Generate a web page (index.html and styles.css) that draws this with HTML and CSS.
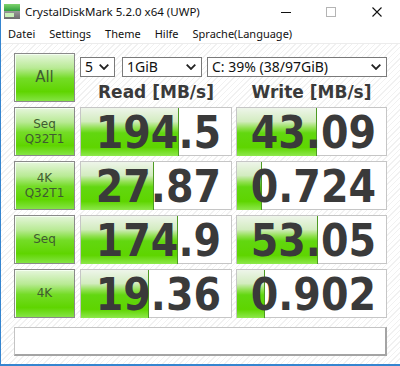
FILE: index.html
```html
<!DOCTYPE html>
<html lang="de">
<head>
    <meta charset="UTF-8">
    <meta name="viewport" content="width=device-width, initial-scale=1.0">
    <title>CrystalDiskMark 5.2.0 x64 (UWP)</title>
    <link rel="stylesheet" href="styles.css">
</head>
<body>
    <div class="window">
        <div class="title-bar">
            <svg class="app-icon" width="16" height="16" viewBox="0 0 16 16">
                <defs>
                    <linearGradient id="top" x1="0" y1="0" x2="0" y2="1">
                        <stop offset="0" stop-color="#7fd46f"/>
                        <stop offset="1" stop-color="#2f9e3c"/>
                    </linearGradient>
                    <linearGradient id="body" x1="0" y1="0" x2="0" y2="1">
                        <stop offset="0" stop-color="#9a9a9a"/>
                        <stop offset="1" stop-color="#6c6c6c"/>
                    </linearGradient>
                </defs>
                <rect x="0" y="0" width="16" height="7" fill="url(#top)"/>
                <rect x="0" y="7" width="16" height="8" fill="url(#body)"/>
                <rect x="1" y="9" width="9" height="4" fill="#c8f0b8"/>
            </svg>
            <span class="title">CrystalDiskMark 5.2.0 x64 (UWP)</span>
            <div class="caption-btns">
                <span class="cap-btn min"></span>
                <span class="cap-btn max"></span>
                <svg class="cap-btn close" width="10" height="10" viewBox="0 0 10 10">
                    <path d="M0.5 0.5 L9.5 9.5 M9.5 0.5 L0.5 9.5" stroke="#111" stroke-width="1.1"/>
                </svg>
            </div>
        </div>

        <div class="menu-bar">
            <span>Datei</span>
            <span>Settings</span>
            <span>Theme</span>
            <span>Hilfe</span>
            <span>Sprache(Language)</span>
        </div>

        <div class="content">
            <div class="top">
                <div class="test-btn all">All</div>
                <div class="top-right">
                    <div class="selects">
                        <div class="dropdown count">5<svg class="chev" width="10" height="6" viewBox="0 0 10 6"><path d="M0.7 0.7 L5 5 L9.3 0.7" fill="none" stroke="#222" stroke-width="1.8"/></svg></div>
                        <div class="dropdown size">1GiB<svg class="chev" width="10" height="6" viewBox="0 0 10 6"><path d="M0.7 0.7 L5 5 L9.3 0.7" fill="none" stroke="#222" stroke-width="1.8"/></svg></div>
                        <div class="dropdown drive">C: 39% (38/97GiB)<svg class="chev" width="10" height="6" viewBox="0 0 10 6"><path d="M0.7 0.7 L5 5 L9.3 0.7" fill="none" stroke="#222" stroke-width="1.8"/></svg></div>
                    </div>
                    <div class="heads">
                        <div>Read [MB/s]</div>
                        <div>Write [MB/s]</div>
                    </div>
                </div>
            </div>

            <div class="results">
                <div class="test-btn">Seq<br>Q32T1</div>
                <div class="meter"><div class="bar" style="width: 97px"></div><div class="num">194.5</div></div>
                <div class="meter"><div class="bar" style="width: 79px"></div><div class="num">43.09</div></div>

                <div class="test-btn">4K<br>Q32T1</div>
                <div class="meter"><div class="bar" style="width: 72px"></div><div class="num">27.87</div></div>
                <div class="meter"><div class="bar" style="width: 24px"></div><div class="num">0.724</div></div>

                <div class="test-btn">Seq</div>
                <div class="meter"><div class="bar" style="width: 96px"></div><div class="num">174.9</div></div>
                <div class="meter"><div class="bar" style="width: 80px"></div><div class="num">53.05</div></div>

                <div class="test-btn">4K</div>
                <div class="meter"><div class="bar" style="width: 67px"></div><div class="num">19.36</div></div>
                <div class="meter"><div class="bar" style="width: 27px"></div><div class="num">0.902</div></div>
            </div>

            <div class="comment"></div>
        </div>
    </div>
</body>
</html>
```

FILE: styles.css
```css
:root {
    --blue: #3585d0;
    --ink: #3a3a3a;
    --label: #3f5c30;
    --green-fill: linear-gradient(to bottom, #eef5ea 0%, #d3ecc0 28%, #8fe04e 42%, #62d710 52%, #5ed500 82%, #8ee84c 100%);
}

html, body { margin: 0; }
body { width: 400px; height: 366px; overflow: hidden; background: #fff; }

.window { box-sizing: border-box; width: 400px; height: 366px; border-left: 1px solid var(--blue); border-bottom: 2px solid var(--blue); display: flex; flex-direction: column; background: repeating-linear-gradient(135deg, #fff 0 3px, #f1f1f1 3px 4px); }

.title-bar { height: 24px; background: #fff; display: flex; align-items: center; font-family: "Noto Sans", sans-serif; font-size: 11.5px; color: #111; }
.app-icon { margin: 0 5px 0 3px; }
.title { padding-bottom: 2px; }
.caption-btns { margin-left: auto; display: flex; align-items: center; height: 100%; }
.cap-btn { display: block; }
.cap-btn.min { width: 10px; height: 1px; background: #111; margin-right: 35px; }
.cap-btn.max { width: 8px; height: 8px; border: 1px solid #b4b4b4; margin-right: 36px; }
.cap-btn.close { margin-right: 18px; }

.menu-bar { height: 19px; background: #fff; border-bottom: 1px solid #ececec; display: flex; align-items: center; gap: 14px; padding-left: 7px; font-family: "Noto Sans", sans-serif; font-size: 11px; color: #111; }

.content { padding: 9px 0 0 13px; }

.top { display: flex; gap: 5px; }
.top-right { display: flex; flex-direction: column; }
.selects { display: flex; margin-top: 4px; height: 20px; }
.dropdown { box-sizing: border-box; height: 20px; border: 1px solid #7a7a7a; background: #fff; display: flex; align-items: center; justify-content: space-between; padding: 0 5px 0 4px; font-family: "Noto Sans", sans-serif; font-size: 14px; color: #111; line-height: 18px; }
.dropdown.count { width: 35px; }
.dropdown.size { width: 80px; margin-left: 7px; }
.dropdown.drive { width: 180px; margin-left: 5px; }
.chev { flex: none; }

.heads { display: grid; grid-template-columns: 152px 151px; column-gap: 4px; margin-top: 6px; font-family: "DejaVu Sans", sans-serif; font-weight: bold; font-size: 17px; line-height: 19px; color: var(--ink); text-align: center; }

.test-btn { box-sizing: border-box; width: 61px; height: 49px; border: 1px solid #8a8a8a; box-shadow: inset 1px 1px 0 #f4fff0; background: linear-gradient(to bottom, #e6f6dc 0%, #b8ea94 30%, #74dc26 52%, #5fd500 80%, #84e444 100%); display: flex; align-items: center; justify-content: center; text-align: center; font-family: "DejaVu Sans", sans-serif; font-size: 12px; line-height: 15px; color: var(--label); }
.test-btn.all { font-size: 15px; }

.results { display: grid; grid-template-columns: 62px 152px 151px; grid-auto-rows: 49px; column-gap: 4px; row-gap: 5px; margin-top: 5px; }

.meter { box-sizing: border-box; border: 1px solid #c6c6c6; background: #fff; display: grid; }
.bar, .num { grid-area: 1 / 1; }
.bar { height: 100%; background: var(--green-fill); border-right: 1px solid #4d9a22; }
.num { text-align: right; padding: 2px 10px 0 0; font-family: "DejaVu Sans Condensed", "DejaVu Sans", sans-serif; font-stretch: condensed; font-weight: bold; font-size: 44px; line-height: 46px; color: var(--ink); }

.comment { box-sizing: border-box; width: 373px; height: 29px; margin-top: 9px; background: #fff; border: 1px solid #c4c4c4; border-right: 2px solid #a4a4a4; border-bottom: 2px solid #a4a4a4; }
```
